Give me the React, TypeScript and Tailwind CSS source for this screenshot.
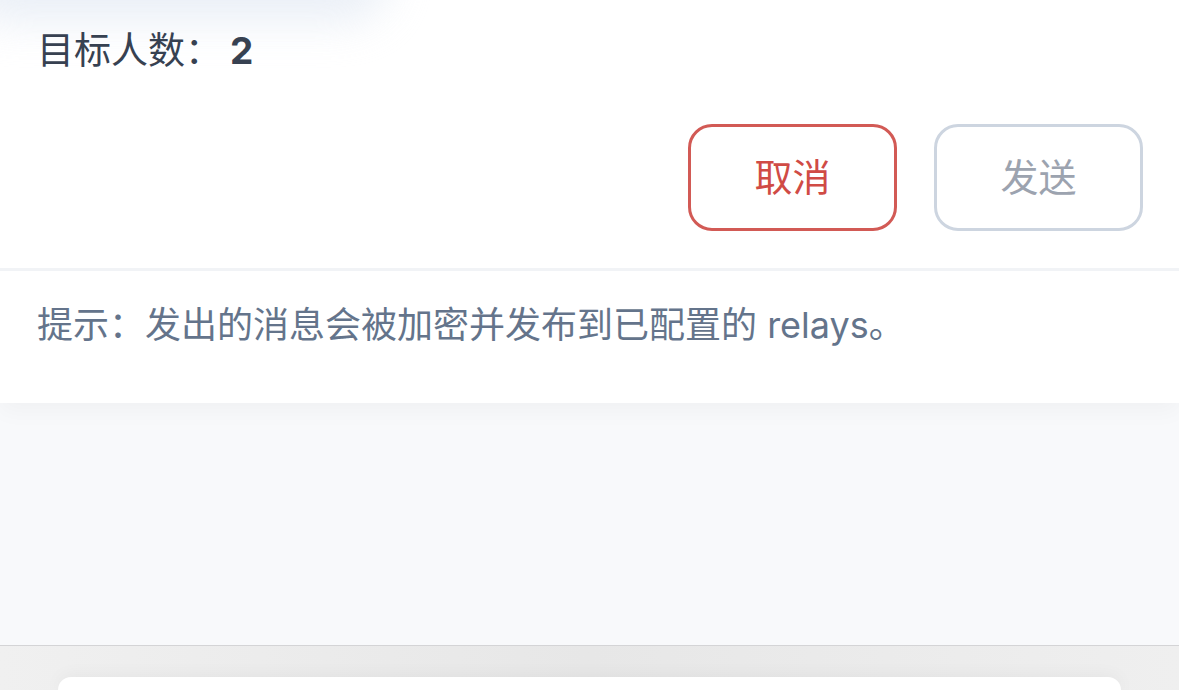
export default function App() {
  const font = { fontFamily: '"Inter", "Noto Sans CJK SC", sans-serif' };
  return (
    <div className="relative w-[1179px] h-[690px] overflow-hidden bg-[#f8f9fb] flex flex-col" style={font}>
      <div className="relative bg-white shadow-[0_8px_22px_rgba(0,0,0,0.035)] z-10">
        <div className="absolute left-[-40px] top-[-72px] w-[430px] h-[95px] rounded-full bg-[#e6ecf5] blur-[20px] opacity-80" />
        <div className="relative h-[268px] pl-[37px] pr-[36px] pt-[25px]">
          <div className="h-[50px] flex items-center text-[37px] text-[#374151] leading-none">
            <span>目标人数：</span>
            <span className="font-bold ml-[8px]">2</span>
          </div>
          <div className="mt-[49px] flex justify-end gap-[37px]">
            <button className="w-[209px] h-[107px] rounded-[24px] border-[3px] border-[#d25a55] bg-white text-[38px] text-[#d04b45] flex items-center justify-center">
              取消
            </button>
            <button className="w-[209px] h-[107px] rounded-[24px] border-[3px] border-[#cdd5e0] bg-white text-[38px] text-[#9ca3af] flex items-center justify-center">
              发送
            </button>
          </div>
        </div>
        <div className="h-[3px] bg-[#f1f3f6]" />
        <div className="h-[132px] px-[37px] pt-[29px]">
          <div className="h-[50px] flex items-center text-[36px] text-[#64748b] leading-none">
            提示：发出的消息会被加密并发布到已配置的 relays。
          </div>
        </div>
      </div>
      <div className="flex-1" />
      <div className="h-[45px] border-t border-[#d4d4d6] bg-gradient-to-r from-[#f0f0f0] via-[#e7e7e7] to-[#efefef] px-[58px] pt-[31px]">
        <div className="h-full bg-white rounded-t-[36px] shadow-[0_0_18px_rgba(0,0,0,0.06)]" />
      </div>
    </div>
  );
}
